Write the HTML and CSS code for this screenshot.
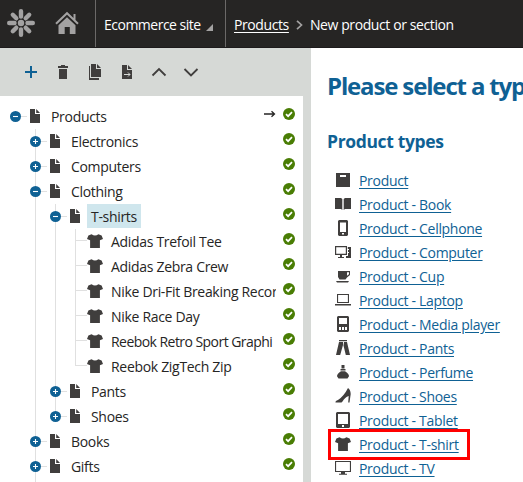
FILE: index.html
```html
<!DOCTYPE html>
<html lang="en">
<head>
<meta charset="utf-8">
<title>New product or section</title>
<link rel="stylesheet" href="styles.css">
</head>
<body>
<svg class="sprite" aria-hidden="true">
  <symbol id="file" viewBox="0 0 16 16"><path d="M3 1h5v5h5v9H3zM9.2 1L13 4.9H9.2z"/></symbol>
  <symbol id="shirt" viewBox="0 0 16 16"><path d="M4.6 1.2Q8 4 11.4 1.2L14.6 2.4 16 6 12.9 7.200V15H3.100V7.200L0 6 1.400 2.400z"/></symbol>
  <symbol id="plus" viewBox="0 0 11 11"><circle cx="5.500" cy="5.500" r="5.500" fill="#0f6194"/><path d="M3 5.500h5M5.500 3v5" stroke="#fff" stroke-width="1.100"/></symbol>
  <symbol id="minus" viewBox="0 0 11 11"><circle cx="5.500" cy="5.500" r="5.500" fill="#0f6194"/><path d="M3 5.500h5" stroke="#fff" stroke-width="1.100"/></symbol>
  <symbol id="ok" viewBox="0 0 12 12"><circle cx="6" cy="6" r="6" fill="#497d04"/><path d="M3 6.200l2.100 2 3.900-4" fill="none" stroke="#fff" stroke-width="1.700"/></symbol>
</svg>

<header class="topbar">
  <div class="brand">
    <svg class="logo" viewBox="0 0 28 28"><g stroke="#a3a2a2" stroke-width="4.400" stroke-linecap="round"><path d="M14 2.200v5.300M14 20.500v5.300M2.200 14h5.300M20.500 14h5.300M5.800 5.800l3.500 3.500M18.700 18.700l3.500 3.500M22.200 5.800l-3.500 3.500M9.300 18.700l-3.500 3.500"/></g><circle cx="14" cy="14" r="3.200" fill="#a3a2a2"/></svg>
    <svg class="home" viewBox="0 0 24 24"><path d="M12 6.200l8.500 8V23h-5.700v-7H9.700v7H3.500v-8.800z" fill="#a3a2a2"/><path d="M1 12.800L12 2.200l11 10.600M19.500 3v6" fill="none" stroke="#a3a2a2" stroke-width="2"/></svg>
  </div>
  <div class="site"><span class="t-site">Ecommerce site</span><svg viewBox="0 0 7 7"><path d="M7 0v7H0z" fill="#a3a2a2"/></svg></div>
  <nav class="crumbs"><a href="#">Products</a><svg viewBox="0 0 7 10"><path d="M1 .8L5.500 5 1 9.200" fill="none" stroke="#a3a2a2" stroke-width="1.700"/></svg><span>New product or section</span></nav>
</header>

<div class="body">
  <aside class="side">
    <div class="tools">
      <svg viewBox="0 0 16 16"><path d="M8 2v12M2 8h12" stroke="#0f6194" stroke-width="2"/></svg>
      <svg viewBox="0 0 16 16"><path d="M3 2h3V1h4v1h3v2H3zM4 5h8v10H4z"/></svg>
      <svg viewBox="0 0 16 16"><path d="M4 0h5v5h5v8H4zM10 0l4 4h-4zM2 2h1v12h9v2H2z"/></svg>
      <svg viewBox="0 0 16 16"><path d="M3 1h5v5h5v9H3zM9 1l4 4H9z"/><path d="M5 10.500h6M9 8.500l2 2-2 2" fill="none" stroke="#d6d9d6"/></svg>
      <svg viewBox="0 0 16 16"><path d="M1.500 11.500L8 5l6.500 6.500" fill="none" stroke="#403e3d" stroke-width="1.800"/></svg>
      <svg viewBox="0 0 16 16"><path d="M1.500 5L8 11.500 14.500 5" fill="none" stroke="#403e3d" stroke-width="1.800"/></svg>
    </div>
    <div class="panel">
      <ul class="tree">
        <li><div class="row"><svg class="tg"><use href="#minus"/></svg><svg class="ic"><use href="#file"/></svg><span class="lb"><b>Products</b></span><svg class="arrow" viewBox="0 0 12 8"><path d="M0 4h10.500M7.500 1.200L10.500 4 7.500 6.800" fill="none" stroke="#262524" stroke-width="1.300"/></svg><svg class="ok"><use href="#ok"/></svg></div>
        <ul class="open">
          <li><div class="row"><svg class="tg"><use href="#plus"/></svg><svg class="ic"><use href="#file"/></svg><span class="lb"><b>Electronics</b></span><svg class="ok"><use href="#ok"/></svg></div></li>
          <li><div class="row"><svg class="tg"><use href="#plus"/></svg><svg class="ic"><use href="#file"/></svg><span class="lb"><b>Computers</b></span><svg class="ok"><use href="#ok"/></svg></div></li>
          <li><div class="row"><svg class="tg"><use href="#minus"/></svg><svg class="ic"><use href="#file"/></svg><span class="lb"><b>Clothing</b></span><svg class="ok"><use href="#ok"/></svg></div>
          <ul>
            <li><div class="row"><svg class="tg"><use href="#minus"/></svg><svg class="ic"><use href="#file"/></svg><span class="lb"><b class="sel">T-shirts</b></span><svg class="ok"><use href="#ok"/></svg></div>
            <ul>
              <li><div class="row leaf"><span class="tg"></span><svg class="ic"><use href="#shirt"/></svg><span class="lb"><b>Adidas Trefoil Tee</b></span><svg class="ok"><use href="#ok"/></svg></div></li>
              <li><div class="row leaf"><span class="tg"></span><svg class="ic"><use href="#shirt"/></svg><span class="lb"><b>Adidas Zebra Crew</b></span><svg class="ok"><use href="#ok"/></svg></div></li>
              <li><div class="row leaf"><span class="tg"></span><svg class="ic"><use href="#shirt"/></svg><span class="lb"><b>Nike Dri-Fit Breaking Recor</b></span><svg class="ok"><use href="#ok"/></svg></div></li>
              <li><div class="row leaf"><span class="tg"></span><svg class="ic"><use href="#shirt"/></svg><span class="lb"><b>Nike Race Day</b></span><svg class="ok"><use href="#ok"/></svg></div></li>
              <li><div class="row leaf"><span class="tg"></span><svg class="ic"><use href="#shirt"/></svg><span class="lb"><b class="tight">Reebok Retro Sport Graphi</b></span><svg class="ok"><use href="#ok"/></svg></div></li>
              <li><div class="row leaf"><span class="tg"></span><svg class="ic"><use href="#shirt"/></svg><span class="lb"><b>Reebok ZigTech Zip</b></span><svg class="ok"><use href="#ok"/></svg></div></li>
            </ul></li>
            <li><div class="row"><svg class="tg"><use href="#plus"/></svg><svg class="ic"><use href="#file"/></svg><span class="lb"><b>Pants</b></span><svg class="ok"><use href="#ok"/></svg></div></li>
            <li><div class="row"><svg class="tg"><use href="#plus"/></svg><svg class="ic"><use href="#file"/></svg><span class="lb"><b>Shoes</b></span><svg class="ok"><use href="#ok"/></svg></div></li>
          </ul></li>
          <li><div class="row"><svg class="tg"><use href="#plus"/></svg><svg class="ic"><use href="#file"/></svg><span class="lb"><b>Books</b></span><svg class="ok"><use href="#ok"/></svg></div></li>
          <li class="last"><div class="row"><svg class="tg"><use href="#plus"/></svg><svg class="ic"><use href="#file"/></svg><span class="lb"><b>Gifts</b></span><svg class="ok"><use href="#ok"/></svg></div></li>
        </ul></li>
      </ul>
    </div>
  </aside>

  <main class="main">
    <h1>Please select a typ</h1>
    <h2>Product types</h2>
    <ul class="types">
      <li><svg viewBox="0 0 16 16"><path fill-rule="evenodd" d="M1 1h14v14H1zM5 3v2h6V3z"/></svg><a href="#">Product</a></li>
      <li><svg viewBox="0 0 16 16"><path d="M0 2h6l1.300 1v11L6 13H0zM16 2h-6L8.700 3v11l1.300-1h6z"/></svg><a href="#">Product - Book</a></li>
      <li><svg viewBox="0 0 16 16"><path fill-rule="evenodd" d="M4 0h8l1 1v14l-1 1H4l-1-1V1zM5 2.500v9.500h6V2.500zM7 13v1.500h2V13z"/></svg><a href="#">Product - Cellphone</a></li>
      <li><svg viewBox="0 0 16 16"><path fill-rule="evenodd" d="M0 2h12v9H7v2h2v1H3v-1h2v-2H0zM1.200 3.200v6.600h9.600V3.200zM12.800 3H16v11h-5v-2h2V9h1V8h-1V6h1V5h-1.200z"/></svg><a href="#">Product - Computer</a></li>
      <li><svg viewBox="0 0 16 16"><path fill-rule="evenodd" d="M3 3h12v4l-3 2.500L10.500 11.500h-6L3 9zM12 4.200v3.600l2-1.500V4.200zM1 13h13l-1 1.500H2z"/></svg><a href="#">Product - Cup</a></li>
      <li><svg viewBox="0 0 16 16"><path fill-rule="evenodd" d="M2 2h12v9H2zM3.100 3.100v6.800h9.800V3.100zM0 12h16v1.500H0z"/></svg><a href="#">Product - Laptop</a></li>
      <li><svg viewBox="0 0 16 16"><path fill-rule="evenodd" d="M3 0h10l1 1v14l-1 1H3l-1-1V1zM4 2v6h8V2zM4 11v3h2v-3zM7 11v3h2v-3zM10 11v3h2v-3z"/></svg><a href="#">Product - Media player</a></li>
      <li><svg viewBox="0 0 16 16"><path d="M4 0h8v1.200H4zM4 2h4v3L5.200 15H1zM9 2h3l3 13h-4.200L8.500 5.500z"/></svg><a href="#">Product - Pants</a></li>
      <li><svg viewBox="0 0 16 16"><path d="M6.500 1h3v3.500h-3zM5.500 5h5v1.500h-5zM6 7.200h4q4 2.300 4 5L12.500 14.500h-9L2 12.200q0-2.700 4-5z"/></svg><a href="#">Product - Perfume</a></li>
      <li><svg viewBox="0 0 16 16"><path d="M13 0q2.500 1.500 2.700 6L14.500 14.500h-1.300L13.700 8Q10 9 7.500 13.500L6.500 14.500H.5Q0 13 3 12 9 8 13 0z"/></svg><a href="#">Product - Shoes</a></li>
      <li><svg viewBox="0 0 16 16"><path fill-rule="evenodd" d="M2 0h12l1 1v14l-1 1H2l-1-1V1zM3 2v10h10V2zM7 13v2h2v-2z"/></svg><a href="#">Product - Tablet</a></li>
      <li class="marked"><svg><use href="#shirt"/></svg><a href="#">Product - T-shirt</a></li>
      <li><svg viewBox="0 0 16 16"><path fill-rule="evenodd" d="M0 1h16v11h-6v1.700h2v1H4v-1h2V12H0zM1.100 2.100v8.800h13.800V2.100z"/></svg><a href="#">Product - TV</a></li>
    </ul>
  </main>
</div>
</body>
</html>
```
FILE: styles.css
```css
* { box-sizing: border-box; }
body {
  margin: 0;
  height: 482px;
  overflow: hidden;
  background: #fff;
  color: #262524;
  font: 14px/24px "Open Sans", "Noto Sans", sans-serif;
  letter-spacing: -0.31px;
  white-space: nowrap;
}
svg { display: block; flex: none; fill: #403e3d; }
ul { list-style: none; margin: 0; padding: 0; }
b { font-weight: 400; }
.sprite { position: absolute; width: 0; height: 0; }

.topbar {
  display: flex;
  height: 48px;
  background: #262524;
  border-bottom: 1px solid #1d1b1c;
  color: #fff;
  font-size: 14px;
  letter-spacing: -0.4px;
  line-height: 49px;
}
.brand { display: flex; width: 96px; padding: 9px 0 0 7px; border-right: 1px solid #6b6968; }
.logo { width: 28px; height: 28px; }
.home { width: 24px; height: 24px; margin: 2px 0 0 20px; }
.site { display: flex; width: 130px; padding-left: 8px; border-right: 1px solid #6b6968; }
.t-site { width: 97px; letter-spacing: -0.5px; }
.site svg { width: 7px; height: 7px; margin: 24px 0 0 5px; }
.crumbs { display: flex; padding-left: 8px; }
.crumbs svg { width: 7px; height: 10px; margin: 20px 7px 0; }
.crumbs a { color: #fff; text-underline-offset: 2px; }

.body { display: flex; height: 434px; }
.side { width: 311px; flex: none; background: #d6d9d6; }
.tools { display: flex; gap: 16px; height: 48px; padding: 16px 0 0 23px; }
.tools svg { width: 16px; height: 16px; }
.panel { width: 303px; height: 386px; padding: 8px 0 0 10px; background: #fff; overflow: hidden; }

.tree ul {
  padding-left: 20px;
  background: linear-gradient(#e0e0e0, #e0e0e0) 25px 0 / 1px calc(100% - 13px) no-repeat;
}
.tree ul.open { background-size: 1px 100%; }
.tree .last { padding-bottom: 20px; }
.row {
  display: flex;
  height: 25px;
  background: linear-gradient(#e0e0e0, #e0e0e0) 11px 12px / 6px 1px no-repeat;
}
.row.leaf { background-position: 5px 11px; background-size: 12px 1px; }
.tg { width: 11px; height: 11px; margin: 7px 6px 0 0; }
.ic { width: 16px; height: 16px; margin: 4px 4px 0 0; }
.lb { flex: 1; overflow: hidden; margin-right: 7px; height: 24px; line-height: 25px; }
.lb b { display: inline-block; padding-left: 4px; }
.lb .sel { padding-right: 4px; background: #cfe6ed; }
.lb .tight { letter-spacing: -0.55px; }
.arrow { width: 12px; height: 8px; margin: 6px 7px 0 0; }
.ok { width: 12px; height: 12px; margin: 4px 8px 0 0; }

.main { flex: 1; overflow: hidden; padding-left: 16px; color: #0f6194; }
h1 { margin: 22px 0 0; font-size: 24px; line-height: 32px; font-weight: 700; letter-spacing: -1.15px; }
h2 { margin: 27px 0 0; font-size: 17.5px; line-height: 24px; font-weight: 700; letter-spacing: -0.35px; }
.types { padding: 16px 0 0 8px; }
.types li { display: flex; gap: 8px; height: 24px; }
.types svg { width: 16px; height: 16px; margin-top: 3px; }
.types a { color: #0f6194; text-underline-offset: 2px; }
.types .marked {
  width: 142px;
  height: 31px;
  margin: -4px 0 -3px -7px;
  padding: 1px 0 0 4px;
  border: 3px solid #f00;
}
```
